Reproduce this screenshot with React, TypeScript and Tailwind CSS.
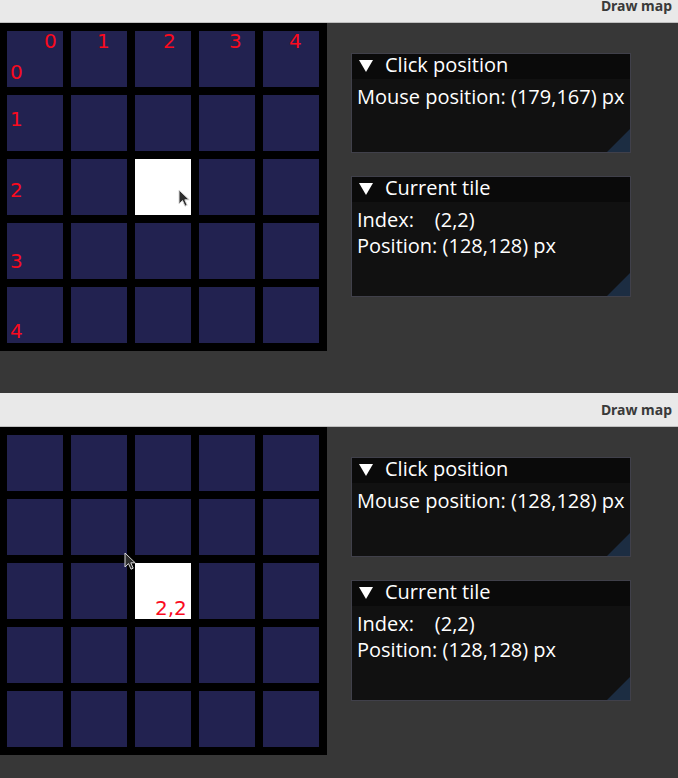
import React from "react";

type Label = { text: string; left: number; top: number };

const colLabels: Label[] = [
  { text: "0", left: 44, top: 8 },
  { text: "1", left: 97, top: 8 },
  { text: "2", left: 163, top: 8 },
  { text: "3", left: 229, top: 8 },
  { text: "4", left: 289, top: 8 },
];

const rowLabels: Label[] = [
  { text: "0", left: 10, top: 39 },
  { text: "1", left: 10, top: 86 },
  { text: "2", left: 10, top: 157 },
  { text: "3", left: 10, top: 228 },
  { text: "4", left: 10, top: 298 },
];

function Cursor({ x, y }: { x: number; y: number }) {
  return (
    <svg
      width="13"
      height="19"
      viewBox="0 0 13 19"
      className="pointer-events-none absolute"
      style={{ left: x - 1, top: y - 1 }}
    >
      <path
        d="M1 1 L1 15 L4.5 11.6 L7 17.2 L9.2 16.2 L6.8 10.8 L11.2 10.8 Z"
        fill="#2e2e2e"
        stroke="#d8d8d8"
        strokeWidth="1"
        strokeLinejoin="round"
      />
    </svg>
  );
}

function Board({
  labels,
  cursor,
  showIndex,
}: {
  labels: boolean;
  cursor: { x: number; y: number };
  showIndex: boolean;
}) {
  const tiles = Array.from({ length: 25 }, (_, i) => i);

  return (
    <div className="relative h-[328px] w-[327px] shrink-0 bg-black pl-[7px] pt-[8px]">
      <div className="grid grid-cols-[repeat(5,56px)] grid-rows-[repeat(5,56px)] gap-[8px]">
        {tiles.map((i) => (
          <div
            key={i}
            className={i === 12 ? "bg-white" : "bg-[#222250]"}
          />
        ))}
      </div>

      {labels &&
        [...colLabels, ...rowLabels].map((l, i) => (
          <span
            key={i}
            className="absolute font-['DejaVu_Sans',sans-serif] text-[20px] leading-[20px] text-[#fa0a1e]"
            style={{ left: l.left, top: l.top }}
          >
            {l.text}
          </span>
        ))}

      {showIndex && (
        <span className="absolute left-[155px] top-[171px] font-['DejaVu_Sans',sans-serif] text-[20px] leading-[20px] text-[#fa0a1e]">
          2,2
        </span>
      )}

      <Cursor x={cursor.x} y={cursor.y} />
    </div>
  );
}

function Panel({
  title,
  lines,
  tall,
}: {
  title: string;
  lines: string[];
  tall?: boolean;
}) {
  return (
    <div
      className={`relative w-[280px] border border-[#40404a] bg-[#111111] ${
        tall ? "h-[121px]" : "h-[100px]"
      }`}
    >
      <div className="flex h-[25px] items-start bg-[#0a0a0a] pl-[7px]">
        <svg width="14" height="12" viewBox="0 0 14 12" className="mt-[6px] shrink-0">
          <polygon points="0,0 14,0 7,12" fill="#ffffff" />
        </svg>
        <span className="ml-[12px] font-['Open_Sans',sans-serif] text-[20px] leading-[22px] text-white">
          {title}
        </span>
      </div>
      <div className="px-[5px] pt-[5px] font-['Open_Sans',sans-serif] text-[20px] leading-[26px] text-white">
        {lines.map((line) => (
          <div key={line} className="whitespace-pre">
            {line}
          </div>
        ))}
      </div>
      <svg
        width="23"
        height="23"
        viewBox="0 0 23 23"
        className="absolute bottom-0 right-0"
      >
        <polygon points="23,0 23,23 0,23" fill="#1c2d42" />
      </svg>
    </div>
  );
}

function DrawMapWindow({
  barClass,
  mouse,
  labels,
  cursor,
  showIndex,
  contentClass,
}: {
  barClass: string;
  mouse: string;
  labels: boolean;
  cursor: { x: number; y: number };
  showIndex: boolean;
  contentClass: string;
}) {
  return (
    <div className="flex flex-col">
      <div
        className={`flex items-end justify-end border-b border-[#bfbfbf] bg-[#e9e9e9] pb-[9px] pr-[6px] ${barClass}`}
      >
        <span className="font-['Noto_Sans',sans-serif] text-[14px] font-bold leading-[14px] text-[#3a3a3a]">
          Draw map
        </span>
      </div>
      <div className={`flex bg-[#373737] ${contentClass}`}>
        <Board labels={labels} cursor={cursor} showIndex={showIndex} />
        <div className="ml-[24px] mt-[30px] flex flex-col gap-[23px]">
          <Panel title="Click position" lines={[`Mouse position: ${mouse} px`]} />
          <Panel
            title="Current tile"
            lines={["Index:    (2,2)", "Position: (128,128) px"]}
            tall
          />
        </div>
      </div>
    </div>
  );
}

export default function App() {
  return (
    <div className="h-[778px] w-[678px] overflow-hidden bg-[#373737]">
      <DrawMapWindow
        barClass="h-[23px] overflow-hidden"
        mouse="(179,167)"
        labels
        cursor={{ x: 179, y: 167 }}
        showIndex={false}
        contentClass="h-[370px]"
      />
      <DrawMapWindow
        barClass="h-[34px]"
        mouse="(128,128)"
        labels={false}
        cursor={{ x: 125, y: 126 }}
        showIndex
        contentClass="h-[351px]"
      />
    </div>
  );
}
